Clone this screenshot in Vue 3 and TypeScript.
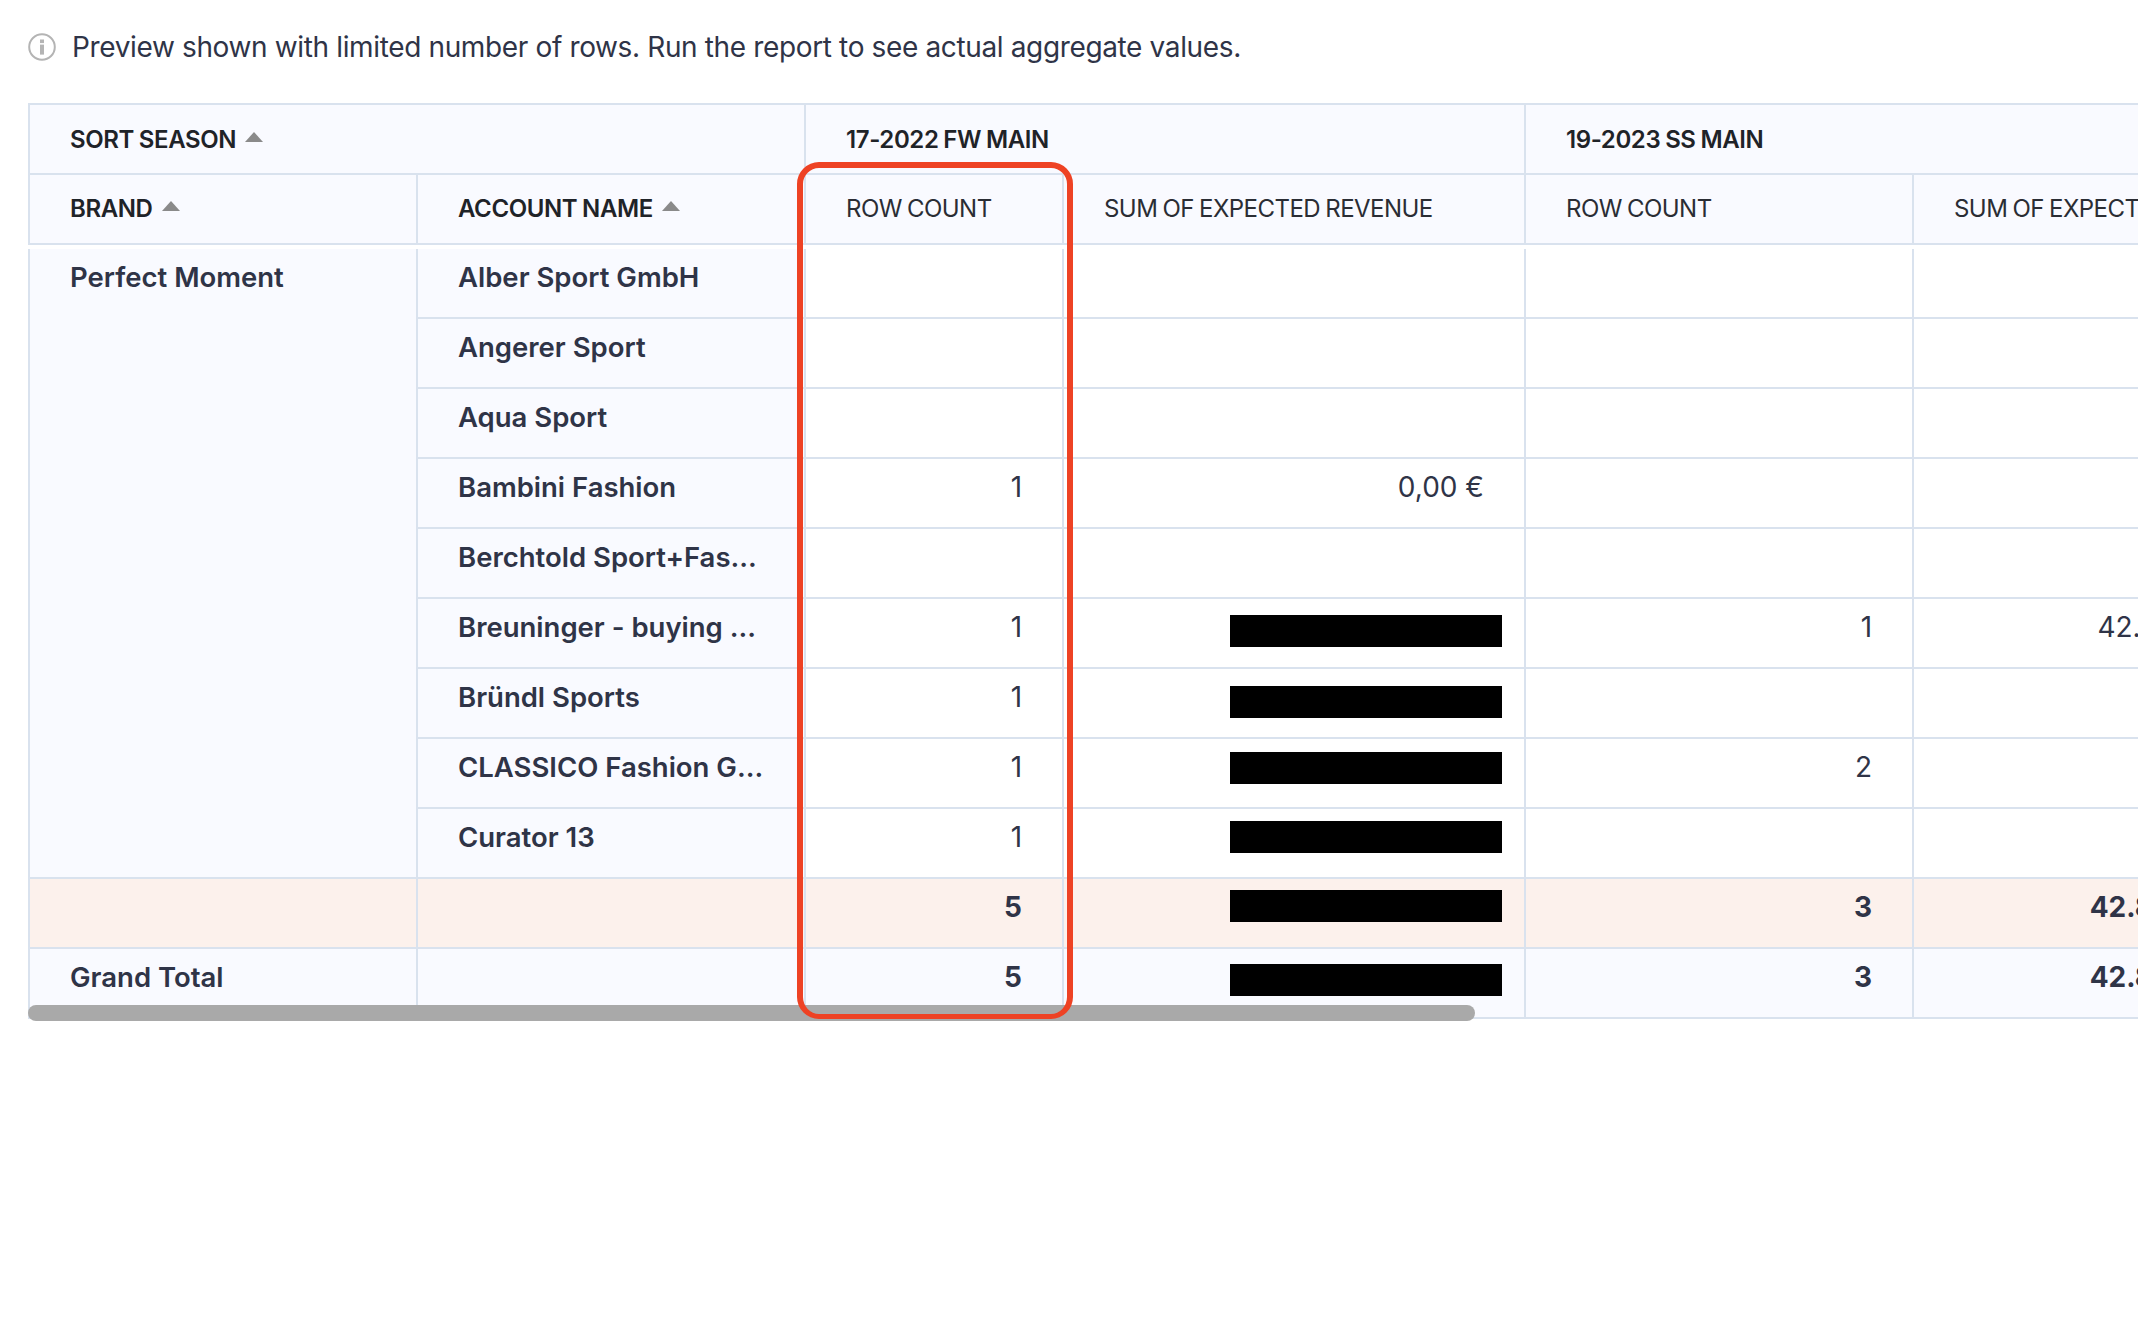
<script setup lang="ts">
interface Row {
  name: string
  a: string
  red?: number
  c: string
  d: string
}

const rows: Row[] = [
  { name: 'Alber Sport GmbH', a: '', c: '', d: '' },
  { name: 'Angerer Sport', a: '', c: '', d: '' },
  { name: 'Aqua Sport', a: '', c: '', d: '' },
  { name: 'Bambini Fashion', a: '1', c: '', d: '' },
  { name: 'Berchtold Sport+Fas...', a: '', c: '', d: '' },
  { name: 'Breuninger - buying ...', a: '1', red: 16, c: '1', d: '42.828,50 €' },
  { name: 'Bründl Sports', a: '1', red: 17, c: '', d: '' },
  { name: 'CLASSICO Fashion G...', a: '1', red: 13, c: '2', d: '' },
  { name: 'Curator 13', a: '1', red: 12, c: '', d: '' },
]
</script>

<template>
  <main class="page">
    <p class="notice">
      <svg class="info" viewBox="0 0 28 28" width="28" height="28" aria-hidden="true">
        <circle cx="14" cy="14" r="12.8" fill="none" stroke="#b4b4b4" stroke-width="2" />
        <rect x="12" y="6.5" width="4" height="3.6" fill="#b4b4b4" />
        <rect x="12" y="11.6" width="4" height="10" fill="#b4b4b4" />
      </svg>
      <span>Preview shown with limited number of rows. Run the report to see actual aggregate values.</span>
    </p>

    <div class="frame">
      <table class="pivot">
        <colgroup>
          <col class="c388" />
          <col class="c388" />
          <col class="c258" />
          <col class="c462" />
          <col class="c388" />
          <col class="c388" />
        </colgroup>
        <thead>
          <tr class="first">
            <th colspan="2">SORT SEASON<i class="sort"></i></th>
            <th colspan="2">17-2022 FW MAIN</th>
            <th colspan="2">19-2023 SS MAIN</th>
          </tr>
          <tr>
            <th>BRAND<i class="sort"></i></th>
            <th>ACCOUNT NAME<i class="sort"></i></th>
            <th class="measure">ROW COUNT</th>
            <th class="measure">SUM OF EXPECTED REVENUE</th>
            <th class="measure">ROW COUNT</th>
            <th class="measure">SUM OF EXPECTED REVENUE</th>
          </tr>
        </thead>
        <tbody>
          <tr class="spacer"><td colspan="6"></td></tr>
          <tr v-for="(row, i) in rows" :key="row.name">
            <td v-if="i === 0" rowspan="9" class="label">Perfect Moment</td>
            <td class="label">{{ row.name }}</td>
            <td class="num">{{ row.a }}</td>
            <td class="num rev">
              <template v-if="row.name === 'Bambini Fashion'">0,00 €</template>
              <span v-if="row.red" class="redact" :style="{ top: row.red + 'px' }"></span>
            </td>
            <td class="num">{{ row.c }}</td>
            <td class="num">{{ row.d }}</td>
          </tr>
          <tr class="subtotal">
            <td></td>
            <td></td>
            <td class="num">5</td>
            <td class="num rev"><span class="redact" style="top: 11px"></span></td>
            <td class="num">3</td>
            <td class="num">42.828,50 €</td>
          </tr>
          <tr class="grand">
            <td class="label">Grand Total</td>
            <td></td>
            <td class="num">5</td>
            <td class="num rev"><span class="redact" style="top: 15px"></span></td>
            <td class="num">3</td>
            <td class="num">42.828,50 €</td>
          </tr>
        </tbody>
      </table>
      <div class="scrollbar"></div>
      <div class="highlight"></div>
    </div>
  </main>
</template>

<style>
html,
body {
  margin: 0;
  background: #fff;
  overflow: hidden;
}
</style>

<style scoped>
.page {
  padding-left: 28px;
  font-family: Inter, "Noto Sans", sans-serif;
  color: #2f3447;
}

.notice {
  height: 94px;
  margin: 0 0 9px;
  display: flex;
  align-items: center;
  gap: 16px;
  font-size: 28px;
  letter-spacing: -0.36px;
  color: #2f3447;
}

.info {
  flex: none;
}

.frame {
  position: relative;
  width: 2110px;
  height: 918px;
  overflow: hidden;
}

.pivot {
  width: 2272px;
  table-layout: fixed;
  border-collapse: separate;
  border-spacing: 0;
  background: #fff;
}

.c388 {
  width: 388px;
}
.c258 {
  width: 258px;
}
.c462 {
  width: 462px;
}

th,
td {
  box-sizing: border-box;
  height: 70px;
  padding: 11px 40px 0;
  border-left: 2px solid #d9e2ee;
  border-bottom: 2px solid #d9e2ee;
  vertical-align: top;
  line-height: 34px;
  white-space: nowrap;
  overflow: hidden;
}

th {
  padding-top: 17px;
  background: #f9faff;
  text-align: left;
  font-size: 24px;
  font-weight: 600;
  letter-spacing: -0.4px;
  word-spacing: -0.8px;
  color: #1f2328;
}

.first th {
  height: 72px;
  padding-top: 18px;
  border-top: 2px solid #d9e2ee;
}

.measure {
  font-weight: 400;
  letter-spacing: -0.55px;
  word-spacing: -1px;
  color: #2a2d34;
}

.sort {
  display: inline-block;
  margin-left: 9px;
  vertical-align: 6px;
  border-left: 9px solid transparent;
  border-right: 9px solid transparent;
  border-bottom: 10px solid #8a8a8a;
}

.spacer td {
  height: 4px;
  padding: 0;
  border: 0;
  line-height: 0;
}

td {
  font-size: 27.5px;
  font-weight: 400;
  color: #2f3447;
}

.label {
  background: #f9faff;
  font-weight: 600;
}

.num {
  font-size: 28px;
  text-align: right;
  padding-right: 40px;
}

.rev {
  position: relative;
}

.redact {
  position: absolute;
  left: 166px;
  width: 272px;
  height: 32px;
  background: #000;
}

.subtotal td {
  background: #fcf1ec;
  font-weight: 700;
}

.grand td {
  background: #f9faff;
  font-weight: 700;
}

.grand .label {
  font-weight: 600;
}

.scrollbar {
  position: absolute;
  left: 0;
  top: 902px;
  width: 1447px;
  height: 16px;
  border-radius: 8px;
  background: #a9a9a9;
}

.highlight {
  position: absolute;
  left: 769px;
  top: 59px;
  box-sizing: border-box;
  width: 276px;
  height: 857px;
  border: 6px solid #ee4224;
  border-bottom-width: 5px;
  border-radius: 22px;
}
</style>
